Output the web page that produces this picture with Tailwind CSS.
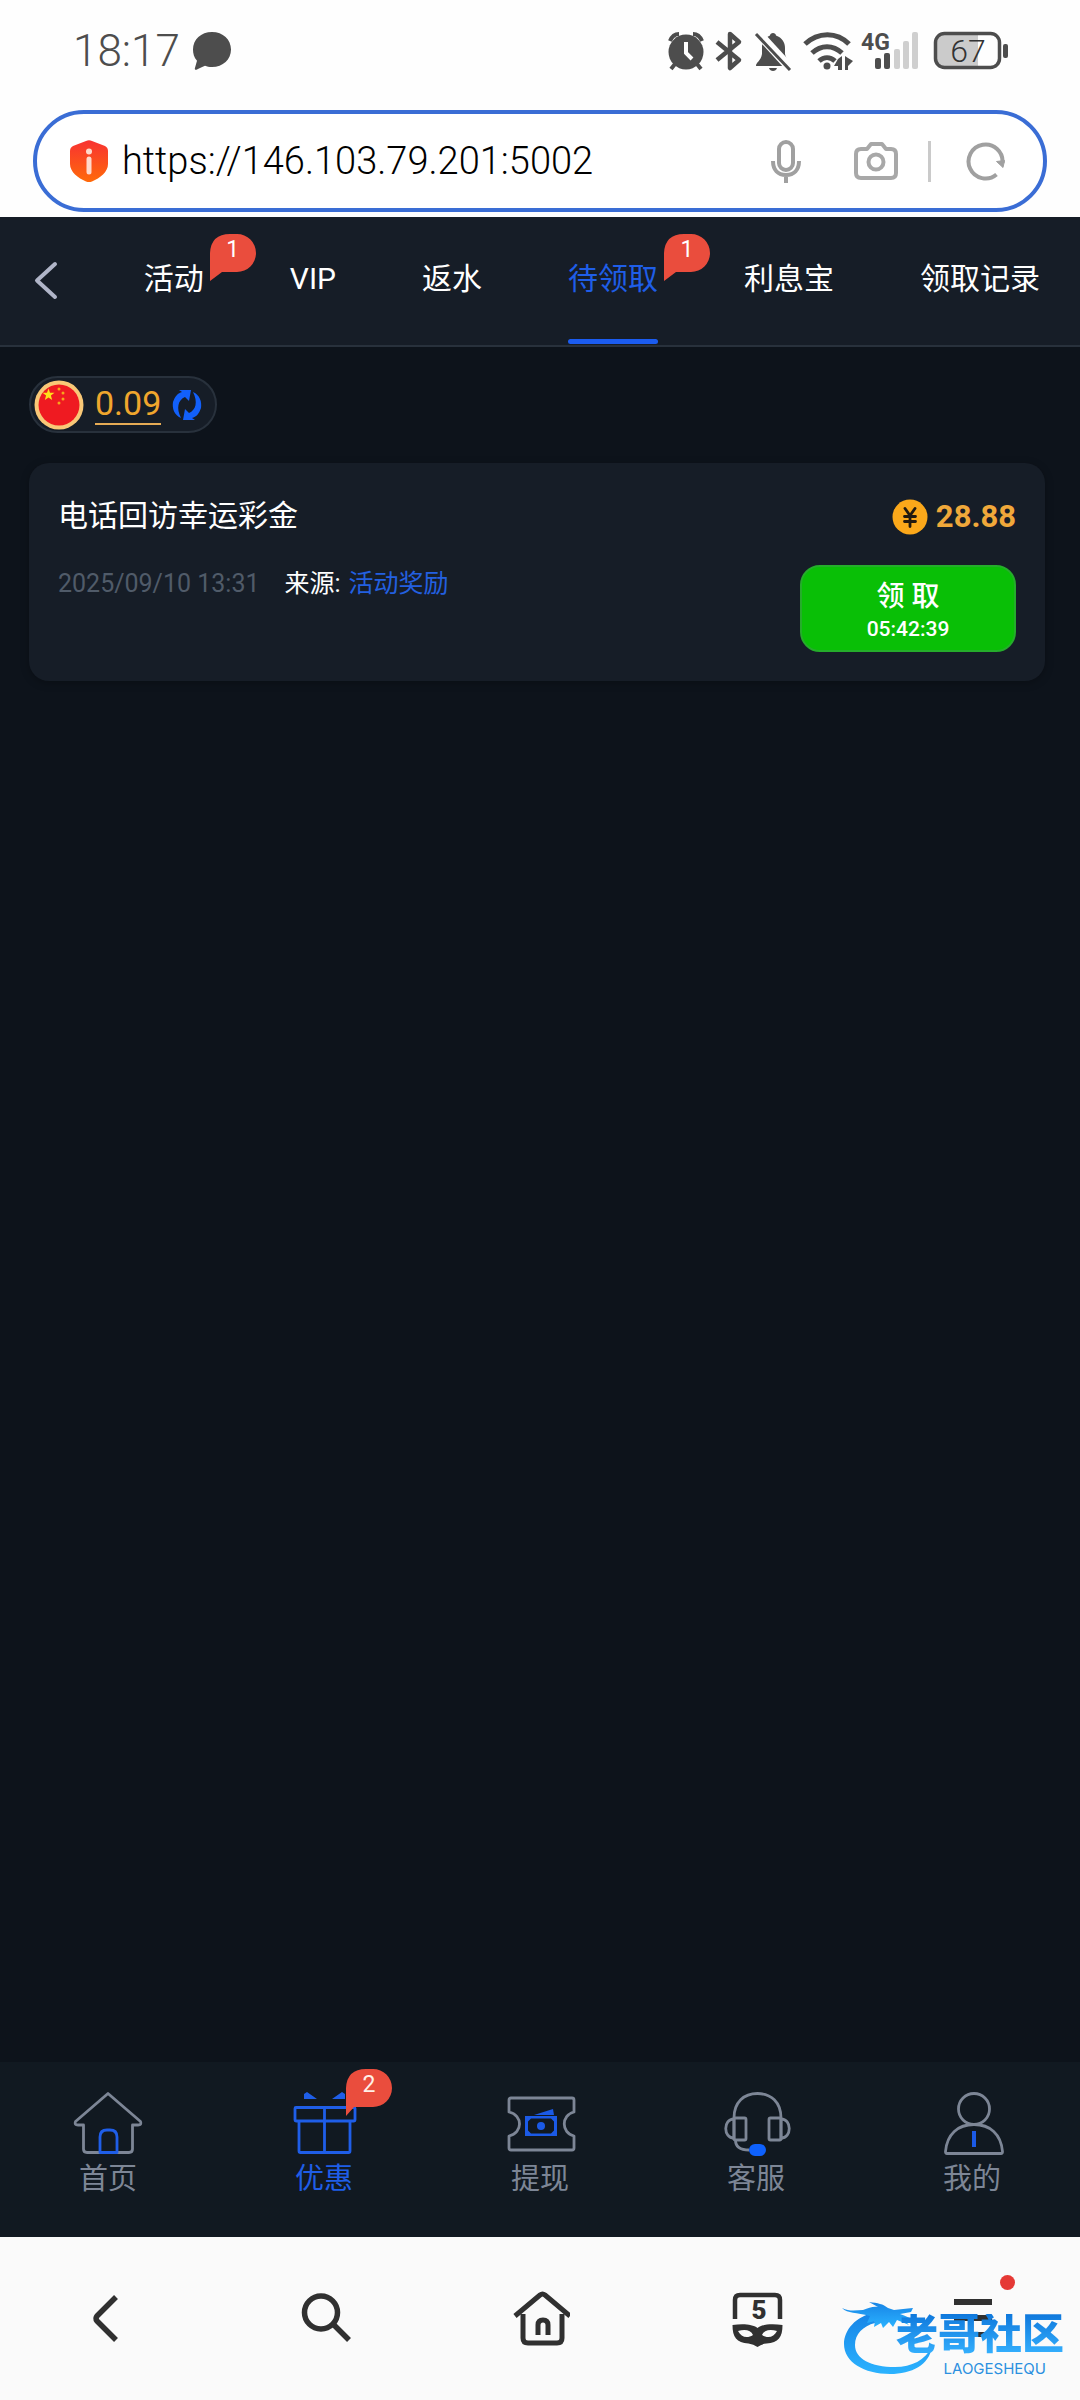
<!DOCTYPE html>
<html lang="zh-CN">
<head>
<meta charset="utf-8">
<meta name="viewport" content="width=device-width, initial-scale=1">
<title>待领取</title>
<script src="https://cdn.jsdelivr.net/npm/@tailwindcss/browser@4"></script>
</head>
<body class="flex min-h-screen flex-col bg-[#0d131b] font-[Roboto,'Noto_Sans_CJK_SC',sans-serif] text-white">

<!-- Status bar and address bar -->
<div class="bg-[#fefefe]">
  <div class="flex h-[102px] items-center justify-between pl-[73px] pr-[70px] text-[#4d4d4d]">
    <div class="flex items-center gap-3">
      <span class="text-[44px] leading-[52px] font-light">18:17</span>
      <svg class="h-[38px] w-[40px]" viewBox="0 0 40 38" fill="currentColor"><path d="M20 0C31 0 39 7.500 39 17.500S31 35 20 35c-3 0-5-.5-7-1.300-3 1-6 3-8.500 4-1.500.5-2-.5-1.500-2l2-7C2 25.500 1 21.500 1 17.500 1 7.500 9 0 20 0Z"/></svg>
    </div>
    <div class="flex items-center">
      <svg class="h-[42px] w-[254px]" viewBox="0 0 254 42" fill="currentColor">
        <!-- alarm -->
        <circle cx="20" cy="22" r="17.500"/>
        <path d="M4 11C6 6 9 4 13 4M27 4c4 0 7 2 9 7M9 34l-4 5M31 34l4 5" fill="none" stroke="currentColor" stroke-width="4"/>
        <path d="M20 12v11l6 6" fill="none" stroke="#fefefe" stroke-width="4"/>
        <!-- bluetooth -->
        <path d="M51 12l22 18-9 8V4l9 8-22 18" fill="none" stroke="currentColor" stroke-width="4.500" stroke-linejoin="round"/>
        <!-- muted bell -->
        <path d="M90 36c0-4 5-5 6-12V16c1-6 4-9 8-10.500C104 2 110 2 110 5.500c6 2 9 7 9 12.500v6c1 6 5 8 6 12Z"/>
        <path d="M103 38h8c-1 4-7 4-8 0Z"/>
        <path d="M91 2l34 37" stroke="#fefefe" stroke-width="9"/>
        <path d="M90 4l34 36" stroke="currentColor" stroke-width="3"/>
        <!-- wifi -->
        <g fill="none" stroke="currentColor" stroke-width="5"><path d="M139 14c13-12.500 32-12.500 44 0"/><path d="M146 23c9-8.500 21-8.500 30 0"/><path d="M153 31c5-4.500 11-4.500 16 0"/></g>
        <circle cx="161" cy="36" r="3.500"/>
        <path d="M176 26v14h-4v-4h-4l4-7ZM179 26v14h3v-4l5-5-5-3Z"/>
        <!-- signal -->
        <rect x="209" y="28" width="6" height="11" rx="2"/><rect x="218" y="23" width="6" height="16" rx="2"/>
        <g fill="#cfcfcf"><rect x="228" y="19" width="6" height="20" rx="2"/><rect x="237" y="11" width="6" height="28" rx="2"/><rect x="246" y="2" width="6" height="37" rx="2"/></g>
        <text x="195" y="20" font-size="23" font-weight="700" font-family="Roboto, sans-serif">4G</text>
      </svg>
      <svg class="ml-3 h-[42px] w-[78px]" viewBox="0 0 78 42">
        <path d="M12 4H46V38H12Q4 38 4 30V12Q4 4 12 4Z" fill="#cbcbcb"/>
        <rect x="3.500" y="3.500" width="64" height="34" rx="9" fill="none" stroke="currentColor" stroke-width="3.500"/>
        <rect x="71" y="14" width="5" height="14" rx="2" fill="currentColor"/>
        <text x="36" y="32" text-anchor="middle" font-size="32" font-weight="300" font-family="Roboto, sans-serif" fill="#333">67</text>
      </svg>
    </div>
  </div>
  <div class="px-[33px] pt-2 pb-[5px]">
    <form class="flex h-[102px] items-center rounded-full border-4 border-[#3a6dd5] bg-white pr-[36px] pl-[32px]">
      <svg class="h-[44px] w-[40px]" viewBox="0 0 40 44"><defs><linearGradient id="shield" x2="0" y2="1"><stop stop-color="#f83232"/><stop offset="1" stop-color="#ff6a0a"/></linearGradient></defs><path d="M17 2q3-1.500 6 0l13 5q3 1.500 3 5v13c0 8-8 14-16 17.500q-3 1.200-6 0C9 39 1 33 1 25V12q0-3.500 3-5Z" fill="url(#shield)"/><circle cx="20" cy="12.500" r="3" fill="#ffd9cc"/><path d="M20 20v13" stroke="#ffd9cc" stroke-width="5" stroke-linecap="round"/></svg>
      <input aria-label="网址" value="https://146.103.79.201:5002" class="ml-[13px] min-w-0 flex-1 bg-transparent text-[38px] leading-[48px] font-light text-black outline-none">
      <button type="button" aria-label="语音"><svg class="h-[46px] w-[32px]" viewBox="0 0 32 46" fill="none" stroke="#a0a0a0" stroke-width="4"><rect x="9" y="4" width="14" height="28" rx="7"/><path d="M3 23c0 9 5 14 13 14s13-5 13-14M16 37v8"/></svg></button>
      <button type="button" aria-label="拍照" class="ml-[52px]"><svg class="h-[42px] w-[44px]" viewBox="0 0 44 42" fill="none" stroke="#a8a8a8" stroke-width="4"><path d="M7 9h6l4-5h11l4 5h5q5 0 5 5v19q0 5-5 5H7q-5 0-5-5V14q0-5 5-5Z" stroke-linejoin="round"/><circle cx="22" cy="22" r="7.500"/></svg></button>
      <span class="mx-[30px] h-[41px] w-[3px] bg-[#cacaca]"></span>
      <button type="button" aria-label="刷新" class="ml-1"><svg class="h-[42px] w-[42px]" viewBox="0 0 42 42" fill="none" stroke="#a0a0a0" stroke-width="4"><path d="M31.500 34.500A17 17 0 1 1 37.500 23"/><path d="M31.500 21.500l8-1-1.500 7Z" fill="#a0a0a0" stroke-width="1"/></svg></button>
    </form>
  </div>
</div>

<!-- Tabs -->
<header class="flex h-[130px] items-start justify-between border-b-2 border-[#28313c] bg-[#161d27] pr-10 pl-[32px]">
  <button aria-label="返回" class="mt-[42px]"><svg class="h-[42px] w-[28px]" viewBox="0 0 28 42" fill="none" stroke="#b0b5c8" stroke-width="4" stroke-linecap="round" stroke-linejoin="round"><path d="M23 5L5 21.500 23 38"/></svg></button>
  <nav class="flex h-full gap-[86px] text-[30px] leading-[124px]">
    <a href="#" class="relative">活动<span class="absolute top-[17px] left-full ml-[6px]"><svg class="h-[47px] w-[46px]" viewBox="0 0 46 47"><path d="M20 0h7a19 19 0 0 1 0 38H12L0 47V19Q1 0 20 0Z" fill="#ea4d3d"/></svg><b class="absolute inset-x-0 top-0 text-center text-[23px] leading-[31px] font-normal">1</b></span></a>
    <a href="#">VIP</a>
    <a href="#">返水</a>
    <a href="#" class="relative text-[#1f5ee8]">待领取<span class="absolute top-[17px] left-full ml-[6px] text-white"><svg class="h-[47px] w-[46px]" viewBox="0 0 46 47"><path d="M20 0h7a19 19 0 0 1 0 38H12L0 47V19Q1 0 20 0Z" fill="#ea4d3d"/></svg><b class="absolute inset-x-0 top-0 text-center text-[23px] leading-[31px] font-normal">1</b></span><i class="absolute inset-x-0 bottom-px h-[5px] rounded-full bg-[#1b5cf0]"></i></a>
    <a href="#">利息宝</a>
    <a href="#">领取记录</a>
  </nav>
</header>

<main class="flex-1 pt-[29px] pr-[35px] pl-[29px]">
  <!-- Balance -->
  <div class="inline-flex h-[57px] items-center rounded-full border-2 border-[#28313c] bg-[#161d27] pr-3 pl-[3px] align-top">
    <svg class="size-[50px]" viewBox="0 0 50 50"><circle cx="25" cy="25" r="24.500" fill="#f9c877"/><circle cx="25" cy="25" r="20.500" fill="#ef1a21"/><path d="M14.500 8.500l1.500 4.300h4.500l-3.600 2.800 1.300 4.400-3.700-2.600-3.700 2.600 1.300-4.400L8.500 12.800H13Z" fill="#ffe01a"/><g fill="#f8a51c"><circle cx="25" cy="9" r="1.500"/><circle cx="29" cy="13" r="1.500"/><circle cx="29" cy="19" r="1.500"/><circle cx="25" cy="23" r="1.500"/></g></svg>
    <span class="ml-[11px] border-b-2 border-[#e6ab55] text-[34px] leading-[39px] text-[#f0a62d]">0.09</span>
    <button aria-label="刷新余额" class="ml-[10px]"><svg class="size-8" viewBox="0 0 32 32" fill="#1260fa"><path d="M10 29C3 26 1 19 2 13 4 7 7 4 11 3L8 1h12l-2 11-4-4C7 11 5 19 10 29Z"/><path d="M22 3c7 3 9 10 8 16-2 6-5 9-9 10l3 2H12l2-11 4 4c7-3 9-11 4-21Z"/></svg></button>
  </div>

  <!-- Reward card -->
  <section class="mt-[30px] flex h-[218px] justify-between rounded-[20px] bg-[#161d27] px-[29px] shadow-[0_2px_8px_rgba(0,0,0,0.25)]">
    <div class="pt-[31px]">
      <h2 class="text-[30px] leading-[44px]">电话回访幸运彩金</h2>
      <p class="mt-[28px] flex text-[25px] leading-[36px]"><time class="text-[#505b69]">2025/09/10 13:31</time><span class="ml-[25px]">来源:</span><a href="#" class="ml-2 text-[#2360e0]">活动奖励</a></p>
    </div>
    <div class="flex flex-col items-end pt-[34px]">
      <p class="flex items-center gap-2 text-[31px] leading-[40px] font-bold text-[#f0a83a]">
        <svg class="size-[36px]" viewBox="0 0 36 36"><circle cx="18" cy="18" r="17.500" fill="#fba81a"/><path d="M13 9.500l5 7 5-7M18 16v11.500M12.500 17.500h11M12.500 22.500h11" fill="none" stroke="#221a10" stroke-width="2.800" stroke-linecap="round"/></svg>28.88</p>
      <button class="mt-[28px] flex h-[87px] w-[216px] flex-col items-center justify-center rounded-[20px] border-2 border-[#25ad2b] bg-[#09bf06] pt-1">
        <span class="text-[28px] leading-[36px] font-medium">领 取</span>
        <span class="text-[21px] leading-[28px] font-medium">05:42:39</span>
      </button>
    </div>
  </section>
</main>

<!-- Site navigation -->
<nav class="grid h-[175px] grid-cols-5 bg-[#111921] pt-[28px] text-[29px] leading-[42px] text-[#7d8696]">
  <a href="#" class="flex flex-col items-center"><svg class="h-[68px] w-[72px]" viewBox="0 0 72 68" fill="none" stroke="currentColor" stroke-width="2.800" stroke-linejoin="round"><path d="M36 3.500L3.500 31.500Q2 35 6 35H11.500V59Q11.500 62.500 15 62.500H57Q60.500 62.500 60.500 59V35H66Q70 35 68.500 31.500Z"/><path d="M28 62.500V47q0-7 7-7h3q7 0 7 7v15.500Z" stroke="#1f5ee8"/></svg>首页</a>
  <a href="#" class="relative flex flex-col items-center text-[#1f5ee8]"><svg class="h-[68px] w-[72px]" viewBox="0 0 72 68" fill="none" stroke="currentColor" stroke-width="2.800" stroke-linejoin="round"><rect x="7" y="17.500" width="60" height="13.500" rx="1"/><path d="M11 31v30q0 1.500 1.500 1.500h48q1.500 0 1.500-1.500V31M36.500 17.500v45"/><path d="M16 9V4l3-2 10 7ZM57 9V4l-3-2-10 7Z" fill="currentColor" stroke="none"/></svg>优惠<span class="absolute -top-[21px] left-1/2 ml-[22px] text-[#fff0e8]"><svg class="h-[47px] w-[46px]" viewBox="0 0 46 47"><path d="M20 0h7a19 19 0 0 1 0 38H8L0 47V19Q1 0 20 0Z" fill="#ea4d3d"/></svg><b class="absolute inset-x-0 top-0 text-center text-[23px] leading-[31px] font-normal">2</b></span></a>
  <a href="#" class="flex flex-col items-center"><svg class="h-[68px] w-[72px]" viewBox="0 0 72 68" fill="none" stroke="currentColor" stroke-width="2.800" stroke-linejoin="round"><path d="M5 22V10q0-2 2-2h61q2 0 2 2V22C57 25 57 43 70 46v12q0 2-2 2H7q-2 0-2-2V46C19 43 19 25 5 22Z"/><g stroke="none" fill="#1b5ae6"><path d="M21 26h32v20H21Zm6 2.500l-3 3v9l3 3h20l3-3v-9l-3-3Z" fill-rule="evenodd"/><circle cx="37" cy="36" r="4"/><path d="M30 25l19-6 1 6Z"/></g></svg>提现</a>
  <a href="#" class="flex flex-col items-center"><svg class="h-[68px] w-[72px]" viewBox="0 0 72 68" fill="none" stroke="currentColor" stroke-width="2.800" stroke-linejoin="round"><path d="M14 50V28C14 12 24 3.500 37.500 3.500S61 12 61 28v22"/><rect x="14" y="28" width="12" height="22" rx="1.500"/><rect x="49" y="28" width="12" height="22" rx="1.500"/><path d="M14 29C3 29 3 48 14 48M61 29c11 0 11 19 0 19M15.500 50c0 6 4 10 13.500 10"/><rect x="29" y="54" width="17" height="12" rx="6" fill="#0e61fd" stroke="none"/></svg>客服</a>
  <a href="#" class="flex flex-col items-center"><svg class="h-[68px] w-[72px]" viewBox="0 0 72 68" fill="none" stroke="currentColor" stroke-width="2.800" stroke-linejoin="round"><ellipse cx="38" cy="19" rx="15.500" ry="15.500"/><path d="M11 63.500q-1.500 0-1.500-2C11 44 22 34.500 38 34.500S65 44 66.500 61.500q0 2-1.500 2Z"/><path d="M38 41v16" stroke="#1b5ae6" stroke-width="4"/></svg>我的</a>
</nav>

<!-- Browser toolbar -->
<footer class="relative grid h-[163px] grid-cols-5 items-start justify-items-center bg-[#fafafa] pt-[52px] text-[#303030]">
  <button aria-label="后退"><svg class="size-[60px]" viewBox="0 0 60 60" fill="none" stroke="currentColor" stroke-width="5.500" stroke-linejoin="round"><path d="M38 8L19 27q-2 2.500 0 5L38 51"/></svg></button>
  <button aria-label="搜索"><svg class="size-[60px]" viewBox="0 0 60 60" fill="none" stroke="currentColor" stroke-width="5.500"><circle cx="27" cy="23.500" r="16.500"/><path d="M39 35l16 16"/></svg></button>
  <button aria-label="主页"><svg class="size-[60px]" viewBox="0 0 60 60" fill="none" stroke="currentColor" stroke-width="5"><path d="M5 27L30 6q2.500-2 5 0L60 27"/><path d="M13 25v24q0 5 5 5h29q5 0 5-5V25M28 46V36q0-5 5-5t5 5v10"/></svg></button>
  <button aria-label="5 个标签页"><svg class="size-[60px]" viewBox="0 0 60 60" fill="currentColor"><path d="M9 30V11q0-5 5-5h35q5 0 5 5v19" fill="none" stroke="currentColor" stroke-width="4.500"/><path d="M6.500 36c10-1.500 20-1 25 3 5-4 15-4.500 25-3 0 12-4 18-16 18.500q-5 .5-9 3.500-4-3-9-3.500C10.500 54 6.500 48 6.500 36Z"/><path d="M12 42c7-2 13-1 15 4-6 4-12 2-15-4ZM51 42c-7-2-13-1-15 4 6 4 12 2 15-4Z" fill="#fafafa"/><text x="33" y="30" text-anchor="middle" font-size="26" font-weight="900" font-family="Roboto, sans-serif">5</text></svg></button>
  <button aria-label="菜单" class="relative"><svg class="size-[60px]" viewBox="0 0 60 60" fill="currentColor"><path d="M12 10h38v6H12ZM12 26h38v6H12ZM12 43h38v5H12Z"/></svg><i class="absolute -top-[14px] left-[58px] size-[15px] rounded-full bg-[#e53935]"></i></button>

  <!-- Community watermark -->
  <div class="pointer-events-none absolute right-[16px] bottom-[24px] h-[82px] w-[222px]">
    <svg class="absolute top-0 left-0 h-[82px] w-[100px]" viewBox="0 0 100 82"><defs><linearGradient id="dragon" x2="0" y2="1"><stop stop-color="#1784e6"/><stop offset="1" stop-color="#2bb3ff"/></linearGradient></defs><g fill="url(#dragon)"><path d="M32 19C14 22 2 36 2 50c0 18 20 30 46 30 22 0 39-9 42-27-7 13-20 20-37 20C29 73 13 65 13 51c0-11 8-19 20-22Z"/><path d="M0 14c8 4 15 2 21 2 6-2 10-4 15-3l-9-5c9 1 14 2 19 6l6 2c6-1 12-1 19-2l-2 4-11 2c5 2 8 3 12 5l-10-1c4 3 5 5 7 7l-12-5-4 7-4-5-6 6-2-5-7 4 1-6-8 2 3-7C14 18 6 20 0 14Z"/></g></svg>
    <div class="absolute top-[20px] right-0 bg-linear-to-b from-[#0f78dc] to-[#36b2ff] bg-clip-text text-[42px] leading-[42px] font-black text-transparent">老哥社区</div>
    <div class="absolute top-[67px] right-[18px] text-[15px] leading-[15px] text-[#2c90e0] font-[Inter,sans-serif]">LAOGESHEQU</div>
  </div>
</footer>
</body>
</html>
